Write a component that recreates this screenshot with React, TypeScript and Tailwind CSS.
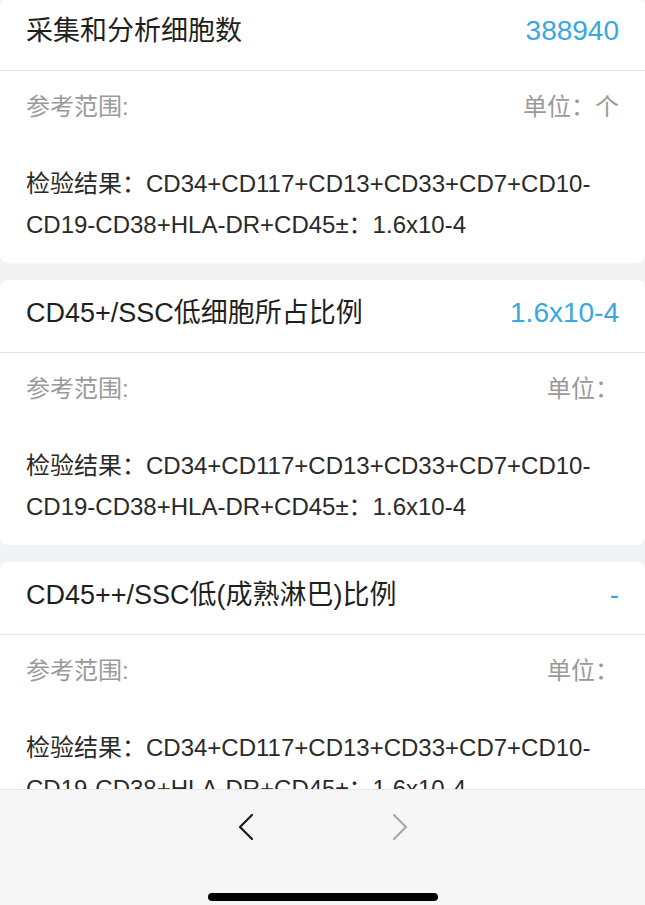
const font = {
  fontFamily: '"Liberation Sans", "Noto Sans CJK SC", sans-serif',
};

interface Item {
  name: string;
  value: string;
  unit: string;
  result: string;
}

const items: Item[] = [
  {
    name: "采集和分析细胞数",
    value: "388940",
    unit: "单位：个",
    result: "检验结果：CD34+CD117+CD13+CD33+CD7+CD10-CD19-CD38+HLA-DR+CD45±：1.6x10-4",
  },
  {
    name: "CD45+/SSC低细胞所占比例",
    value: "1.6x10-4",
    unit: "单位：",
    result: "检验结果：CD34+CD117+CD13+CD33+CD7+CD10-CD19-CD38+HLA-DR+CD45±：1.6x10-4",
  },
  {
    name: "CD45++/SSC低(成熟淋巴)比例",
    value: "-",
    unit: "单位：",
    result: "检验结果：CD34+CD117+CD13+CD33+CD7+CD10-CD19-CD38+HLA-DR+CD45±：1.6x10-4",
  },
];

const ResultCard = ({ item, first }: { item: Item; first?: boolean }) => (
  <div className={`bg-white rounded-[8px] ${first ? "mt-[-2px]" : "mt-[17px]"}`}>
    <div className="h-[73px] pb-[6px] flex items-center justify-between px-[26px] border-b border-[#e3e3e3]">
      <span className="text-[27px] text-[#1f1f1f]">{item.name}</span>
      <span className="text-[28px] text-[#3aa7e0]">{item.value}</span>
    </div>
    <div className="px-[26px] pb-[18px]">
      <div className="h-[72px] flex items-center justify-between text-[24px] text-[#9a9a9a]">
        <span>参考范围:</span>
        <span>{item.unit}</span>
      </div>
      <p className="mt-[20px] text-[24px] leading-[41px] text-[#2a2a2a] break-words">
        {item.result}
      </p>
    </div>
  </div>
);

export default function App() {
  return (
    <div className="w-[645px] h-[905px] flex flex-col bg-[#f2f3f5] overflow-hidden" style={font}>
      <div className="h-[789px] overflow-hidden">
        {items.map((item, i) => (
          <ResultCard key={i} item={item} first={i === 0} />
        ))}
      </div>
      <div className="flex-1 bg-[#f6f6f6] border-t border-[#e6e6e6] flex flex-col items-center">
        <div className="flex items-center gap-[138px] mt-[23px]">
          <svg width="16" height="28" viewBox="0 0 16 28" fill="none">
            <polyline points="14,2 2,14 14,26" stroke="#1a1a1a" strokeWidth="2.2" strokeLinecap="round" strokeLinejoin="round" />
          </svg>
          <svg width="16" height="28" viewBox="0 0 16 28" fill="none">
            <polyline points="2,2 14,14 2,26" stroke="#a8a8a8" strokeWidth="2.2" strokeLinecap="round" strokeLinejoin="round" />
          </svg>
        </div>
        <div className="mt-auto mb-[4px] w-[230px] h-[8px] rounded-full bg-black" />
      </div>
    </div>
  );
}
